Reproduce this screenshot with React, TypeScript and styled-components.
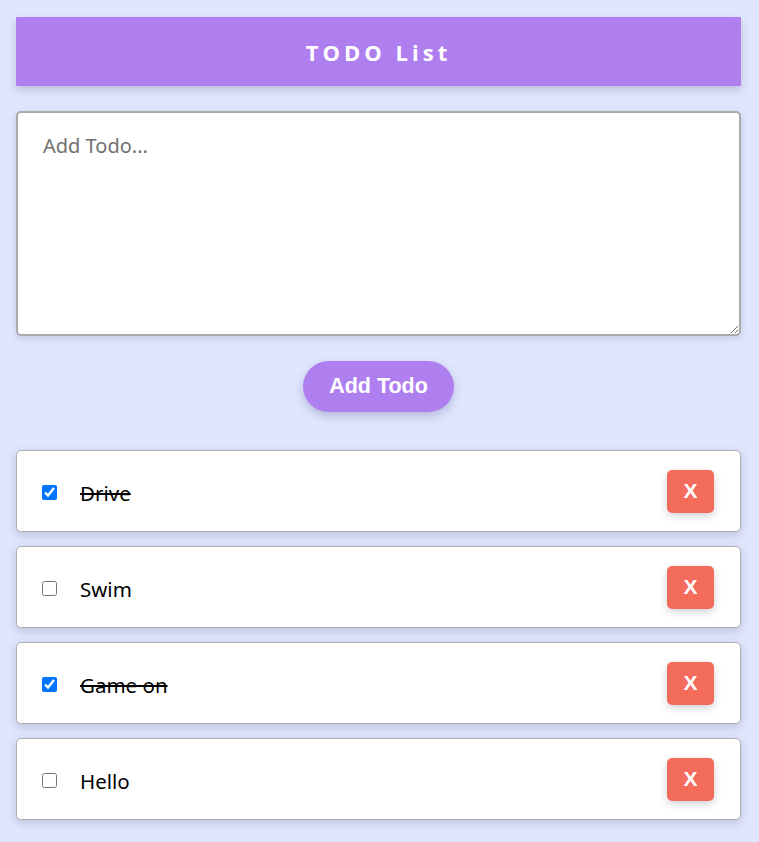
import React, { useState } from "react";
import styled, { createGlobalStyle } from "styled-components";

const Global = createGlobalStyle`
  html, body { margin: 0; padding: 0; background: #e0e6fd; }
  body { font-family: "Noto Sans", "Open Sans", sans-serif; }
  * { box-sizing: border-box; }
`;

const Page = styled.div`
  padding: 17px 18px 20px 16px;
  display: flex;
  flex-direction: column;
`;

const Header = styled.header`
  height: 69px;
  background: #af7fef;
  display: flex;
  align-items: center;
  justify-content: center;
  box-shadow: 0 4px 8px rgba(80, 80, 140, 0.25);
`;

const Title = styled.h1`
  margin: 0;
  color: #fff;
  font-family: "Open Sans", "Noto Sans", sans-serif;
  font-size: 22px;
  font-weight: 700;
  letter-spacing: 4px;
`;

const TextArea = styled.textarea`
  margin-top: 25px;
  height: 225px;
  width: 100%;
  border: 2px solid #aaaaaa;
  border-radius: 5px;
  padding: 19px 25px;
  font-family: "Noto Sans", "Open Sans", sans-serif;
  font-size: 20px;
  background: #fff;
  box-shadow: 0 2px 6px rgba(80, 80, 140, 0.2);
  resize: both;
  outline: none;
  &::placeholder { color: #707070; }
`;

const AddRow = styled.div`
  display: flex;
  justify-content: center;
  margin-top: 25px;
  margin-bottom: 38px;
`;

const AddButton = styled.button`
  width: 151px;
  height: 51px;
  border: none;
  border-radius: 26px;
  background: #af7fef;
  color: #fff;
  font-family: "Liberation Sans", Arial, sans-serif;
  font-weight: 700;
  font-size: 21.5px;
  box-shadow: 0 4px 10px rgba(80, 80, 140, 0.3);
  cursor: pointer;
`;

const List = styled.ul`
  list-style: none;
  margin: 0;
  padding: 0;
  display: flex;
  flex-direction: column;
  gap: 14px;
`;

const Card = styled.li`
  height: 82px;
  background: #fff;
  border: 1px solid #b0b0b0;
  border-radius: 5px;
  display: flex;
  align-items: center;
  padding: 0 26px 0 25px;
  box-shadow: 0 3px 8px rgba(80, 80, 140, 0.25);
`;

const Check = styled.input`
  width: 15px;
  height: 15px;
  margin: 3px 0 0 0;
  accent-color: #0075ff;
`;

const Label = styled.span<{ $done: boolean }>`
  margin: 3px 0 0 23px;
  flex: 1;
  font-size: 20.5px;
  color: #000;
  text-decoration: ${(p) => (p.$done ? "line-through" : "none")};
  text-decoration-thickness: 2px;
`;

const DeleteButton = styled.button`
  width: 47px;
  height: 43px;
  border: none;
  border-radius: 5px;
  background: #f26b5b;
  color: #fff;
  font-family: "Liberation Sans", Arial, sans-serif;
  font-weight: 700;
  font-size: 21px;
  box-shadow: 0 3px 8px rgba(0, 0, 0, 0.18);
  cursor: pointer;
`;

const initial = [
  { id: 1, text: "Drive", done: true },
  { id: 2, text: "Swim", done: false },
  { id: 3, text: "Game on", done: true },
  { id: 4, text: "Hello", done: false },
];

export default function App() {
  const [todos, setTodos] = useState(initial);
  return (
    <Page>
      <Global />
      <Header>
        <Title>TODO List</Title>
      </Header>
      <TextArea placeholder="Add Todo..." />
      <AddRow>
        <AddButton>Add Todo</AddButton>
      </AddRow>
      <List>
        {todos.map((t) => (
          <Card key={t.id}>
            <Check
              type="checkbox"
              checked={t.done}
              onChange={() =>
                setTodos((ts) => ts.map((x) => (x.id === t.id ? { ...x, done: !x.done } : x)))
              }
            />
            <Label $done={t.done}>{t.text}</Label>
            <DeleteButton onClick={() => setTodos((ts) => ts.filter((x) => x.id !== t.id))}>X</DeleteButton>
          </Card>
        ))}
      </List>
    </Page>
  );
}
